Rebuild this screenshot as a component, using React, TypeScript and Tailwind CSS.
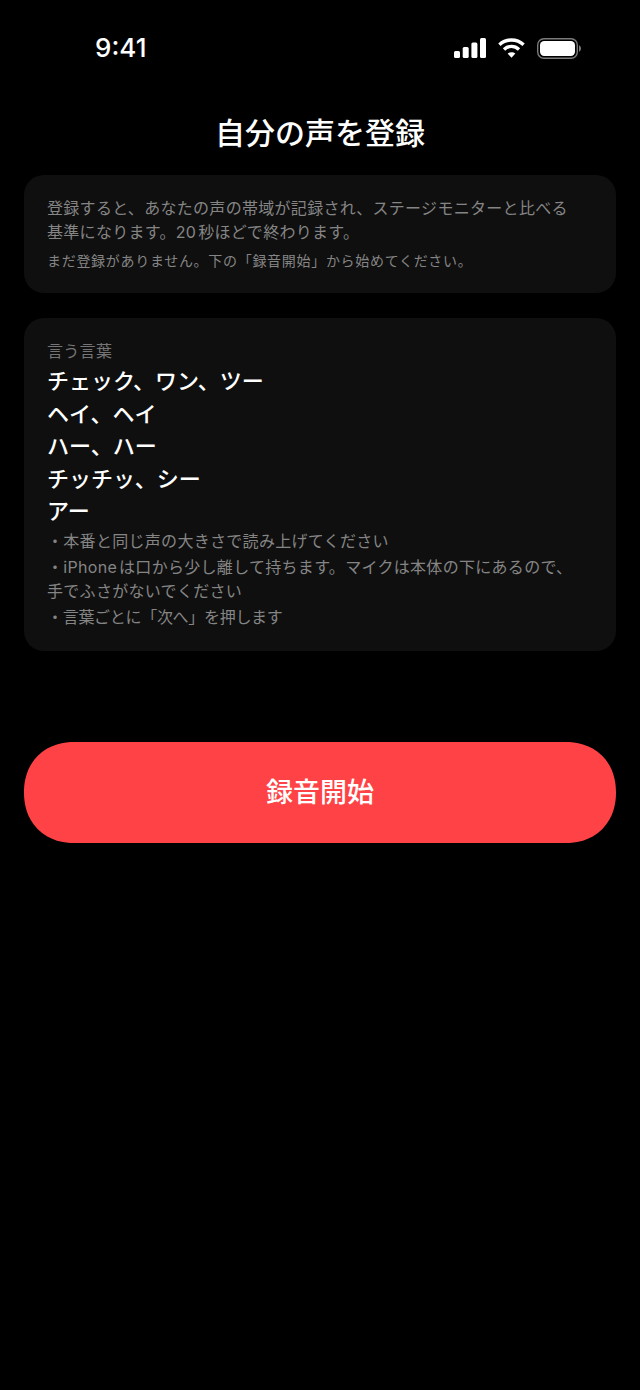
import React from 'react';

const cjk = "font-['Inter','Noto_Sans_CJK_JP',sans-serif]";

const phrases = ['チェック、ワン、ツー', 'ヘイ、ヘイ', 'ハー、ハー', 'チッチッ、シー', 'アー'];

const StatusBar: React.FC = () => (
  <div className="flex h-[96px] items-center justify-between pl-[95px] pr-[59px]">
    <span className="text-[26px] leading-none font-medium text-white">9:41</span>
    <div className="flex items-center gap-[12px]">
      <svg width="32" height="20" viewBox="0 0 32 20" fill="white">
        <rect x="0" y="13" width="6" height="7" rx="1.5" />
        <rect x="8.7" y="9" width="6" height="11" rx="1.5" />
        <rect x="17.4" y="4.5" width="6" height="15.5" rx="1.5" />
        <rect x="26" y="0" width="6" height="20" rx="1.5" />
      </svg>
      <svg width="27" height="20" viewBox="0 0 27 20" fill="none" stroke="white" strokeWidth="3.4">
        <path d="M1.4 6.8C8.2 0.4 18.8 0.4 25.6 6.8" />
        <path d="M6 11.4C10.3 7.4 16.7 7.4 21 11.4" />
        <path d="M13.5 19.8L9.6 15.6C11.8 13.8 15.2 13.8 17.4 15.6Z" fill="white" stroke="none" />
      </svg>
      <svg width="44" height="21" viewBox="0 0 44 21" fill="none">
        <rect x="0.7" y="0.7" width="39.6" height="19.6" rx="6.2" stroke="#7a7a7a" strokeWidth="1.4" />
        <rect x="3" y="3" width="35" height="15" rx="4.2" fill="white" />
        <path d="M42 7.2V13.8C43.2 13.3 44 12.1 44 10.5C44 8.9 43.2 7.7 42 7.2Z" fill="#7a7a7a" />
      </svg>
    </div>
  </div>
);

export default function App() {
  return (
    <div className={`${cjk} h-[1390px] w-[640px] bg-black [text-autospace:normal]`}>
      <StatusBar />
      <h1 className="mt-[19px] text-center text-[30px] leading-[36px] font-medium text-white">自分の声を登録</h1>

      <div className="mx-[24px] mt-[24px] flex h-[118px] flex-col rounded-[20px] bg-[#0f0f0f] pl-[23px] pr-[32px] pt-[21px]">
        <p className="text-[16px] leading-[24px] tracking-[0.3px] text-[#858585]">
          登録すると、あなたの声の帯域が記録され、ステージモニターと比べる基準になります。20秒ほどで終わります。
        </p>
        <p className="mt-[7px] text-[14px] leading-[20px] tracking-[0.7px] text-[#858585]">
          まだ登録がありません。下の「録音開始」から始めてください。
        </p>
      </div>

      <div className="mx-[24px] mt-[25px] flex h-[333px] flex-col rounded-[20px] bg-[#0f0f0f] pl-[23px] pr-[32px] pt-[23px]">
        <p className="text-[16px] leading-[20px] tracking-[0.3px] text-[#757575]">言う言葉</p>
        <div className="mt-[4px]">
          {phrases.map((p) => (
            <p key={p} className="text-[22px] leading-[32.5px] font-medium text-white">{p}</p>
          ))}
        </div>
        <div className="mt-[1px] text-[16px] leading-[25px] tracking-[0.3px] text-[#858585]">
          <p>・本番と同じ声の大きさで読み上げてください</p>
          <p className="mt-[1.5px] leading-[24px]">・iPhoneは口から少し離して持ちます。マイクは本体の下にあるので、手でふさがないでください</p>
          <p className="mt-[1.5px] tracking-[-0.3px]">・言葉ごとに「次へ」を押します</p>
        </div>
      </div>

      <button className="mx-[24px] mt-[91px] flex h-[101px] w-[592px] items-center justify-center rounded-[50px] bg-[#ff4245] pt-[2px] text-[27px] font-medium text-white [corner-shape:superellipse(1.1)]">
        録音開始
      </button>
    </div>
  );
}
